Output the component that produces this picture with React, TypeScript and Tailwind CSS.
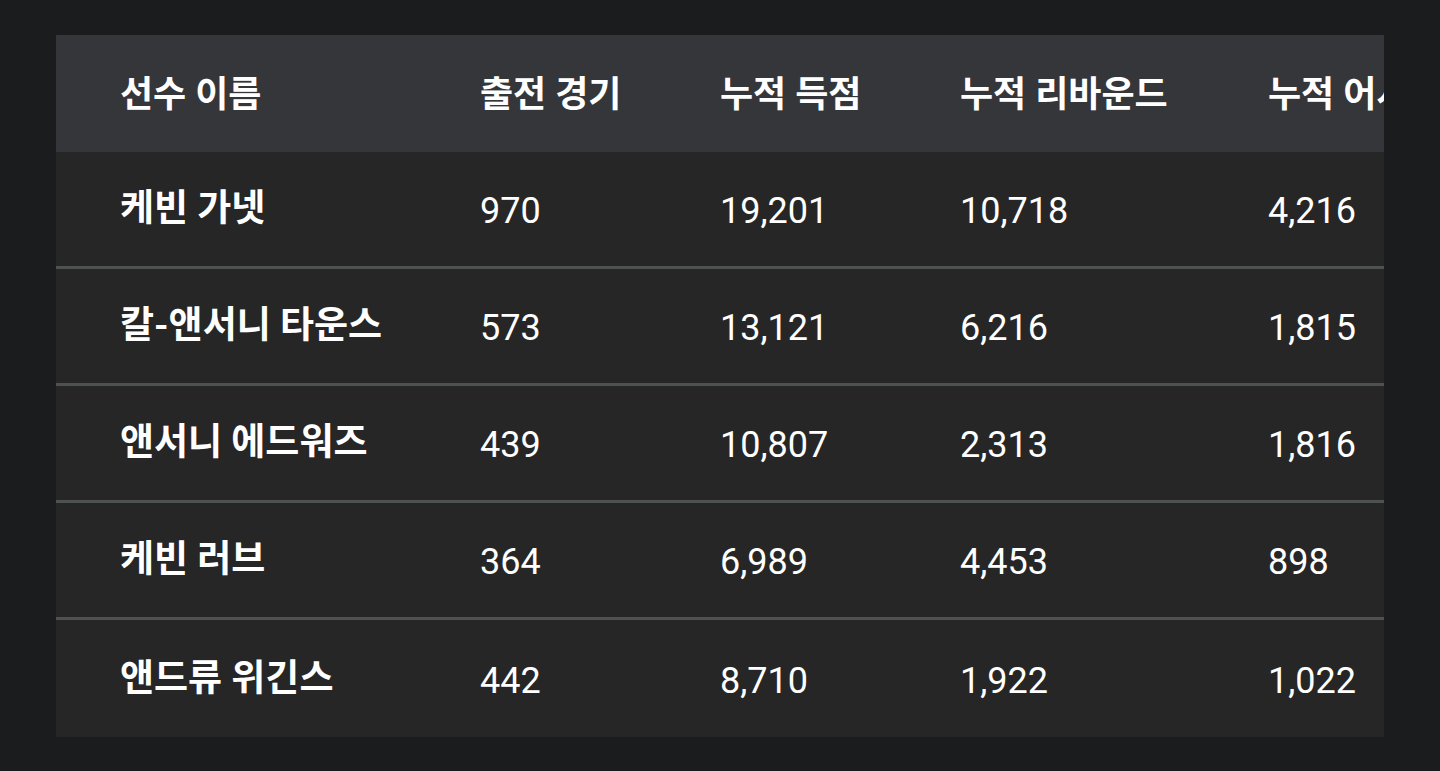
const columns = ["선수 이름", "출전 경기", "누적 득점", "누적 리바운드", "누적 어시스트"];

const players = [
  ["케빈 가넷", "970", "19,201", "10,718", "4,216"],
  ["칼-앤서니 타운스", "573", "13,121", "6,216", "1,815"],
  ["앤서니 에드워즈", "439", "10,807", "2,313", "1,816"],
  ["케빈 러브", "364", "6,989", "4,453", "898"],
  ["앤드류 위긴스", "442", "8,710", "1,922", "1,022"],
];

const widths = ["w-[424px] pl-16", "w-[240px]", "w-[240px]", "w-[308px]", "w-[260px]"];

export default function App() {
  return (
    <div
      className="min-h-screen bg-[#1b1c1e] px-14 pt-[35px] pb-[34px]"
      style={{ fontFamily: '"Roboto", "Noto Sans CJK KR", sans-serif' }}
    >
      <div className="overflow-hidden bg-[#262626] text-white">
        {/* header row, last column runs past the edge */}
        <div className="flex h-[117px] items-center bg-[#35363a] whitespace-nowrap">
          {columns.map((c, i) => (
            <div key={c} className={`${widths[i]} shrink-0 pt-0.5 text-[36px] font-semibold`}>
              {c}
            </div>
          ))}
        </div>
        {players.map((row, r) => (
          <div
            key={row[0]}
            className={`flex h-[117px] items-center whitespace-nowrap ${
              r < players.length - 1 ? "border-b-[3px] border-[#4d524f]" : ""
            }`}
          >
            {row.map((cell, i) => (
              <div
                key={i}
                className={`${widths[i]} shrink-0 ${
                  i === 0 ? "text-[37px] font-bold" : "pt-1 text-[36px] font-normal"
                }`}
              >
                {cell}
              </div>
            ))}
          </div>
        ))}
      </div>
    </div>
  );
}
